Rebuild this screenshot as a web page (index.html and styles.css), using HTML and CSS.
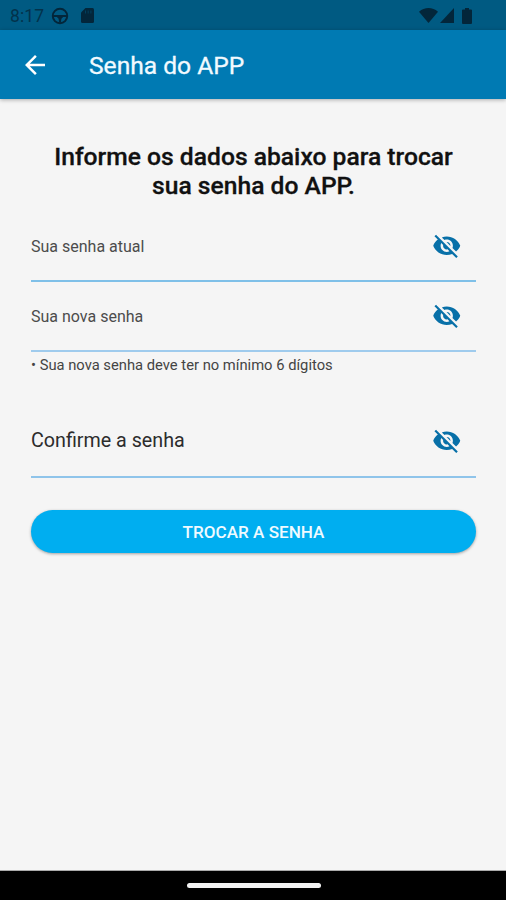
FILE: index.html
```html
<!DOCTYPE html>
<html lang="pt-BR">
<head>
<meta charset="utf-8">
<title>Senha do APP</title>
<link rel="stylesheet" href="styles.css">
</head>
<body>
<svg class="defs" aria-hidden="true">
  <symbol id="eye-off" viewBox="0 0 24 24"><path d="M12 7c2.76 0 5 2.24 5 5 0 .65-.13 1.26-.36 1.83l2.92 2.92c1.51-1.26 2.7-2.89 3.43-4.75-1.73-4.39-6-7.5-11-7.5-1.4 0-2.74.25-3.98.7l2.16 2.16C10.74 7.13 11.35 7 12 7zM2 4.27l2.28 2.28.46.46C3.08 8.3 1.78 10.02 1 12c1.73 4.39 6 7.5 11 7.5 1.55 0 3.03-.3 4.38-.84l.42.42L19.73 22 21 20.73 3.27 3 2 4.27zM7.53 9.8l1.55 1.55c-.05.21-.08.43-.08.65 0 1.66 1.34 3 3 3 .22 0 .44-.03.65-.08l1.55 1.55c-.67.33-1.41.53-2.2.53-2.76 0-5-2.24-5-5 0-.79.2-1.53.53-2.2zm4.31-.78l3.15 3.15.02-.16c0-1.66-1.34-3-3-3l-.17.01z"/></symbol>
</svg>
<div class="screen">
  <div class="status">
    <span class="time">8:17</span>
    <svg class="wheel" viewBox="0 0 18 18"><circle cx="9" cy="9" r="7.2"/><path d="M2 9h14M6 9.5c2 0 3 1.500 3 6M12 9.500c-2 0-3 1.500-3 6"/></svg>
    <svg class="card" viewBox="0 0 13 15"><path d="M4.500 0H11.500Q13 0 13 1.500V13.500Q13 15 11.500 15H1.500Q0 15 0 13.500V4.500z"/><path class="slots" d="M4.500 2.500v3M7.200 2.500v3M9.900 2.500v3"/></svg>
    <div class="system">
      <svg class="wifi" viewBox="0 0 19 15"><path d="M0 3.800C5.500-1.200 13.500-1.200 19 3.800L9.500 15z"/></svg>
      <svg class="signal" viewBox="0 0 14 15"><path d="M14 0V15H0z"/></svg>
      <svg class="battery" viewBox="0 0 10 16"><path d="M3 0h4v1.600h2q1 0 1 1V15q0 1-1 1H1q-1 0-1-1V2.600q0-1 1-1h2z"/></svg>
    </div>
  </div>
  <header class="appbar">
    <svg class="back" viewBox="0 0 24 24"><path d="M20 11H7.830l5.590-5.590L12 4l-8 8 8 8 1.410-1.410L7.830 13H20z"/></svg>
    <h1 class="title">Senha do APP</h1>
  </header>
  <main class="content">
    <h2 class="heading">Informe os dados abaixo para trocar<br>sua senha do APP.</h2>
    <div class="field"><span class="label">Sua senha atual</span><svg class="eye"><use href="#eye-off"/></svg></div>
    <div class="field new"><span class="label">Sua nova senha</span><svg class="eye"><use href="#eye-off"/></svg></div>
    <p class="hint">• Sua nova senha deve ter no mínimo 6 dígitos</p>
    <div class="field confirm"><span class="label">Confirme a senha</span><svg class="eye"><use href="#eye-off"/></svg></div>
    <button class="submit">TROCAR A SENHA</button>
  </main>
  <div class="navbar"><div class="handle"></div></div>
</div>
</body>
</html>
```
FILE: styles.css
```css
* { box-sizing: border-box; }
body { margin: 0; background: #f5f5f5; font-family: Roboto, sans-serif; }
.defs { display: none; }
.screen { width: 506px; height: 900px; display: flex; flex-direction: column; overflow: hidden; background: #f5f5f5; }
.status { height: 30px; flex: none; display: flex; align-items: center; padding: 1px 33px 0 10px; background: #005a82; color: #03324b; }
.status svg { fill: #03263a; display: block; }
.time { width: 41px; font-size: 17.5px; line-height: 20px; letter-spacing: .1px; }
.status .wheel { width: 18px; height: 18px; fill: none; stroke: #03263a; stroke-width: 2; }
.card { width: 13px; height: 15px; margin-left: 12px; }
.card .slots { stroke: #005a82; stroke-width: 1; opacity: .5; }
.system { margin-left: auto; display: flex; align-items: center; }
.wifi { width: 19px; height: 15px; }
.signal { width: 14px; height: 15px; margin-left: 2px; }
.battery { width: 10px; height: 16px; margin-left: 8px; margin-right: 1px; }
.appbar { height: 68.5px; flex: none; display: flex; align-items: center; padding-left: 20px; background: #007ab3; box-shadow: 0 1px 4px rgba(0, 0, 0, .3); z-index: 1; }
.back { width: 30px; height: 30px; margin-top: 1px; fill: #fff; }
.title { margin: 3px 0 0 39px; font-size: 24.6px; line-height: 30px; font-weight: 400; color: #f2faff; -webkit-text-stroke: .3px #f2faff; }
.content { flex: 1; padding: 44.5px 30px 0 31px; }
.heading { margin: 0; text-align: center; font-size: 24.65px; line-height: 28.5px; font-weight: 500; color: #111; white-space: nowrap; -webkit-text-stroke: .3px #111; }
.field { height: 70px; display: flex; align-items: center; justify-content: space-between; border-bottom: 2px solid #7fc0e8; padding-right: 15px; color: #4c4c4c; }
.field .label { margin-top: 1px; font-size: 16px; line-height: 20px; }
.eye { width: 29.5px; height: 29.5px; fill: #0870a8; }
.heading + .field { margin-top: 12px; }
.new { border-color: #9fcbed; }
.hint { margin: 4px 0 0; font-size: 14.75px; line-height: 18px; color: #444; white-space: nowrap; }
.confirm { height: 74px; margin-top: 30px; border-color: #8fc4ea; color: #2c2c2c; }
.confirm .label { margin-top: 2px; font-size: 19.7px; line-height: 24px; }
.confirm .eye { margin-top: 1px; }
.submit { display: block; width: 100%; height: 43px; margin-top: 32px; padding: 1px 0 0; border: 0; border-radius: 22px; background: #00aef0; color: #effaff; font: 500 17.1px/20px Roboto, sans-serif; box-shadow: 0 1px 3px rgba(0, 0, 0, .35); }
.navbar { height: 29px; flex: none; display: flex; justify-content: center; padding-top: 12px; background: #000; box-shadow: 0 -1px 0 #aaa; }
.handle { width: 134px; height: 5px; margin-left: 1px; border-radius: 3px; background: #f2f2f2; }
```
